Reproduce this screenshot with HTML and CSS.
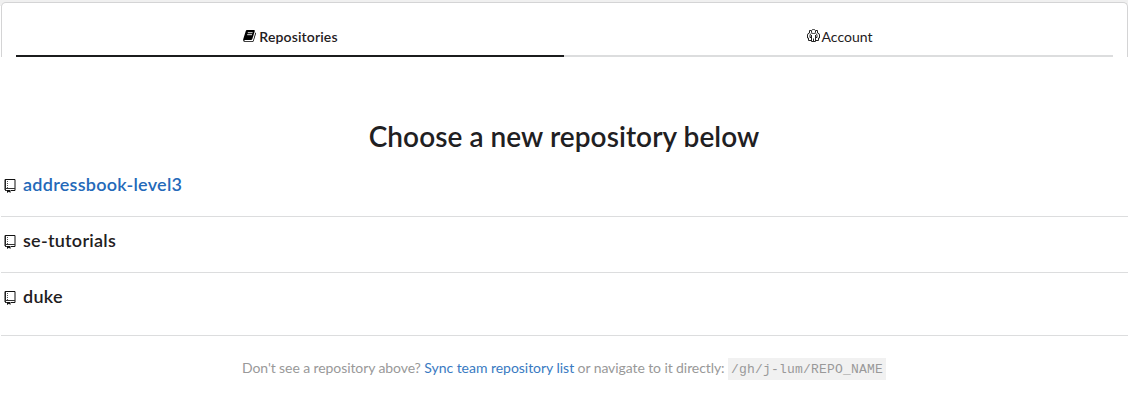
FILE: index.html
```
<!DOCTYPE html>
<html lang="en">
<head>
<meta charset="utf-8">
<title>Repositories</title>
<link rel="stylesheet" href="styles.css">
</head>
<body>
<svg class="defs" width="0" height="0" aria-hidden="true">
  <symbol id="repo" viewBox="0 0 12 14">
    <path d="M1 11V.5H11V11.5H7" fill="none" stroke="#111"/>
    <path d="M1.5 .5V11" stroke="#222"/>
    <path d="M1 9.5H11M1 11.5H3" fill="none" stroke="#333"/>
    <path d="M3.5 2v1M3.5 4v1M3.5 6v1M3.5 8v1" stroke="#555"/>
    <path d="M3 11h3.5v3L4.8 12.8 3 14z" fill="#111"/>
  </symbol>
</svg>
<header class="panel">
  <nav class="tabs">
    <a class="tab active"><svg class="book" viewBox="0 0 13 13"><path d="M4 0H11.1Q12.1.2 11.7 1.4L9.3 9.1Q9 10 8 10H2q-.7 0-.6.7.1.5.8.5H9.2Q9.9 11.2 10.2 10.2L12.4 2.4Q13.2 2.8 12.9 3.8L10.8 10.8Q10.4 12 9.2 12H2Q-.2 11.7.2 9.3L2.7 1.2Q3 .1 4 0Z"/><path d="M4.8 2.7h4.8M4.2 4.7h4.8" stroke="#fff" stroke-width=".9"/></svg><span>Repositories</span></a>
    <a class="tab account"><svg class="group" viewBox="0 0 13 14" fill="none" stroke="#222" stroke-width="1"><path d="M4.5 1.5Q5 .5 6.5.5T8.5 1.5V3.5Q8.2 4.5 6.5 4.5T4.5 3.5ZM4 1.5H2.5V4M9 1.5H10.5V4M2.5 4Q.5 4.3.5 6V9H1.5V11.5H4M10.5 4q2 .3 2 2V9H11.5V11.5H9M4.5 4.5Q3 4.8 3 6.5V8.5H4.5V12.5H8.5V8.5H10V6.5Q10 4.8 8.5 4.5M4.5 6V9M8.5 6V9M6.5 9.5V12.5"/></svg><span>Account</span></a>
  </nav>
</header>
<main>
  <h1 class="title">Choose a new repository below</h1>
  <ul class="repos">
    <li class="repo current"><svg class="icon"><use href="#repo"/></svg><span>addressbook-level3</span></li>
    <li class="repo"><svg class="icon"><use href="#repo"/></svg><span>se-tutorials</span></li>
    <li class="repo"><svg class="icon"><use href="#repo"/></svg><span>duke</span></li>
  </ul>
  <p class="hint">Don't see a repository above? <a class="link">Sync team repository list</a> or navigate to it directly: <code class="path">/gh/j-lum/REPO_NAME</code></p>
</main>
</body>
</html>
```
FILE: styles.css
```
* { box-sizing: border-box; }
body {
  margin: 0;
  padding-top: 2px;
  height: 401px;
  overflow: hidden;
  font: 14px/20px Lato, sans-serif;
  color: #1f2022;
  background: linear-gradient(#f0f0f0 6px, #fff 6px);
}
.defs { display: none; }
.panel {
  height: 55px;
  margin-left: 1px;
  padding: 0 14px;
  border: 1px solid #d4d4d5;
  border-bottom: 0;
  border-radius: 5px 5px 0 0;
  background: #fff;
}
.tabs { display: grid; grid-template-columns: 548px 1fr; height: 54px; }
.tab {
  display: flex;
  justify-content: center;
  align-items: flex-start;
  padding-top: 24px;
  border-bottom: 2px solid #dcddde;
}
.tab.active {
  padding-left: 1px;
  border-color: #1b1c1d;
  font-weight: 600;
  letter-spacing: .15px;
}
.tab.account { padding-left: 2px; }
.book { width: 13px; height: 13px; margin: 3px 3px 0 0; }
.group { width: 13px; height: 14px; margin: 2px 2px 0 0; }
.title {
  margin: 61px 0 0;
  text-align: center;
  font-size: 28px;
  line-height: 36px;
  font-weight: 600;
  letter-spacing: .06px;
}
.repos { margin: 7px 0 0 1px; padding: 0; list-style: none; }
.repo {
  display: flex;
  height: 56px;
  padding: 11px 0 0 3px;
  border-bottom: 1px solid #dcddde;
  font-size: 18px;
  line-height: 24px;
  font-weight: 600;
  letter-spacing: .26px;
}
.repo:last-child { height: 63px; }
.current { color: #2469b9; }
.icon { width: 12px; height: 14px; margin: 7px 7px 0 0; }
.hint {
  margin: 21px 0 0;
  text-align: center;
  color: #999;
  line-height: 22px;
  letter-spacing: -.09px;
}
.link { color: #397ac2; letter-spacing: -.03px; }
.path {
  display: inline-block;
  height: 22px;
  margin-top: 1px;
  padding: 0 3px;
  background: #f1f1f1;
  font: 13px/24px "Liberation Mono", monospace;
  letter-spacing: .2px;
  vertical-align: top;
}
```
